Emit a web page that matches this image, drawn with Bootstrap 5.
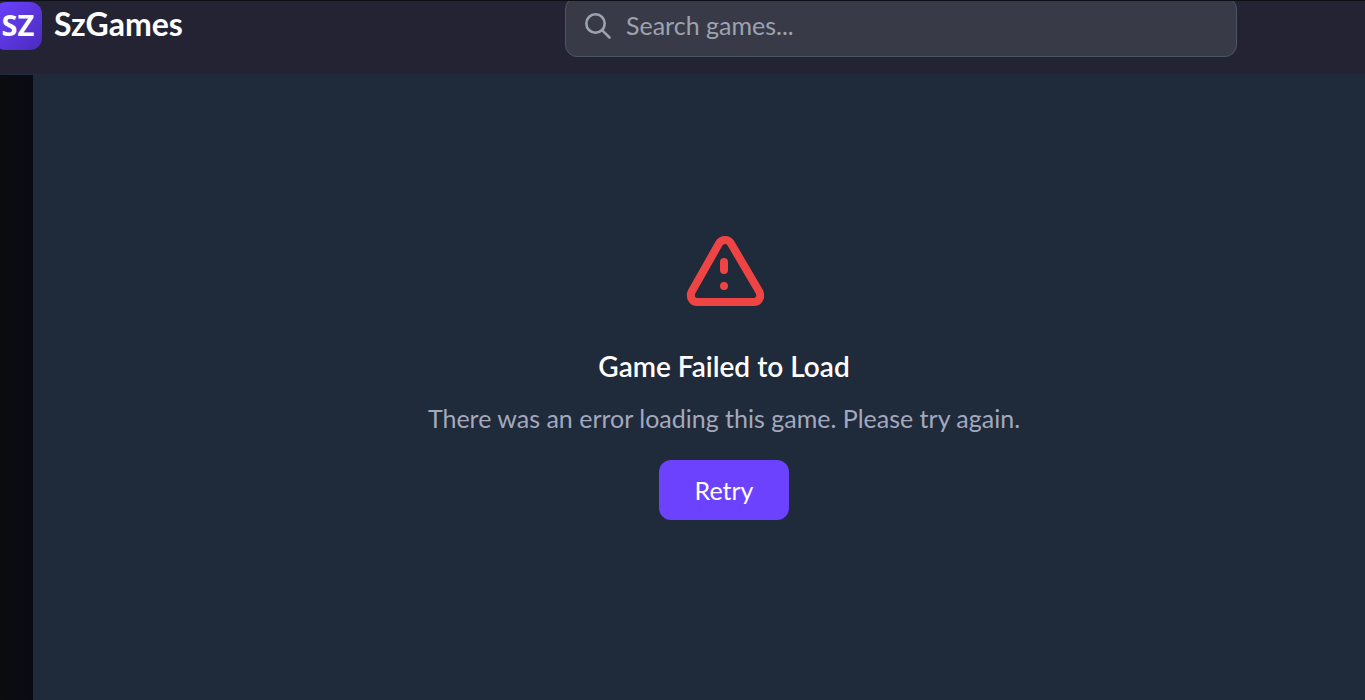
<!DOCTYPE html>
<html lang="en">
<head>
<meta charset="utf-8">
<meta name="viewport" content="width=device-width, initial-scale=1">
<title>SzGames</title>
<link href="https://cdn.jsdelivr.net/npm/bootstrap@5.3.0/dist/css/bootstrap.min.css" rel="stylesheet">
<style>
  body { background: #0b0c13; font-family: Lato, sans-serif; font-size: 25px; line-height: 36px; }
  .site-header { height: 74px; background: #232333; border-top: 1px solid #0d0e16; }
  .brand-link { margin-left: -6px; gap: 12px; padding-top: 1px; }
  .brand-tile { width: 48px; height: 48px; border-radius: 12px; background: linear-gradient(135deg, #6c42ff, #4a2bbd); font: 700 29px/46px "Open Sans", sans-serif; }
  .brand-name { font-size: 32px; line-height: 44px; font-weight: 700; }
  .search-form { flex: 0 1 672px; margin-right: 128px; margin-top: -4px; }
  .search-form .form-control { height: 60px; padding: 0 20px 4px 60px; background: #393a47; border: 1px solid #4b5563; border-radius: 12px; color: #fff; font-size: 25px; }
  .search-form .form-control::placeholder { color: #9ca3af; opacity: 1; }
  .search-icon { left: 18px; top: 14px; }
  .side-rail { flex: 0 0 33px; border-top: 1px solid #1f2a3b; background: linear-gradient(90deg, #0b0d10, #0a0a14); }
  .game-stage { background: #1f2a3b; padding: 0 0 20px 50px; }
  .error-title { font-size: 28px; line-height: 42px; font-weight: 600; margin: 38px 0 13px; }
  .error-text { color: #a3a9bd; margin-bottom: 24px; }
  .retry-btn { --bs-btn-bg: #6c42ff; --bs-btn-color: #fff; --bs-btn-border-width: 0; --bs-btn-hover-bg: #5b34e6; --bs-btn-hover-color: #fff; padding: 12px 36px; border-radius: 12px; font-size: 25px; line-height: 36px; }
</style>
</head>
<body class="d-flex flex-column min-vh-100">
<header class="site-header d-flex align-items-start overflow-hidden">
  <a href="#" class="brand-link d-flex text-white text-decoration-none">
    <span class="brand-tile text-center flex-shrink-0">SZ</span>
    <span class="brand-name">SzGames</span>
  </a>
  <form class="search-form position-relative ms-auto" role="search">
    <svg class="search-icon position-absolute" width="30" height="30" viewBox="0 0 30 30" fill="none" stroke="#9ca3af" stroke-width="2.6" stroke-linecap="round" aria-hidden="true"><circle cx="12.5" cy="12.5" r="9.2"/><path d="M19.3 19.3L26.5 26.5"/></svg>
    <input class="form-control" type="search" placeholder="Search games..." aria-label="Search games">
  </form>
</header>
<div class="d-flex flex-grow-1">
  <aside class="side-rail"></aside>
  <main class="game-stage flex-grow-1 d-flex flex-column align-items-center justify-content-center text-center">
    <svg width="80" height="72" viewBox="0 0 80 72" fill="none" stroke="#ef4444" stroke-width="8" stroke-linecap="round" stroke-linejoin="round" role="img" aria-label="Warning"><path d="M35 8.5L7.8 56.5C5.500 61 7.500 67 13.500 67H69.500C75.500 67 77.500 61 75.200 56.500L47 8.500C44.500 3.800 37.700 3.800 35 8.500Z"/><path d="M40 27V35M40 51h.01"/></svg>
    <h1 class="error-title text-white">Game Failed to Load</h1>
    <p class="error-text">There was an error loading this game. Please try again.</p>
    <button type="button" class="btn retry-btn">Retry</button>
  </main>
</div>
<script src="https://cdn.jsdelivr.net/npm/bootstrap@5.3.0/dist/js/bootstrap.bundle.min.js"></script>
</body>
</html>
